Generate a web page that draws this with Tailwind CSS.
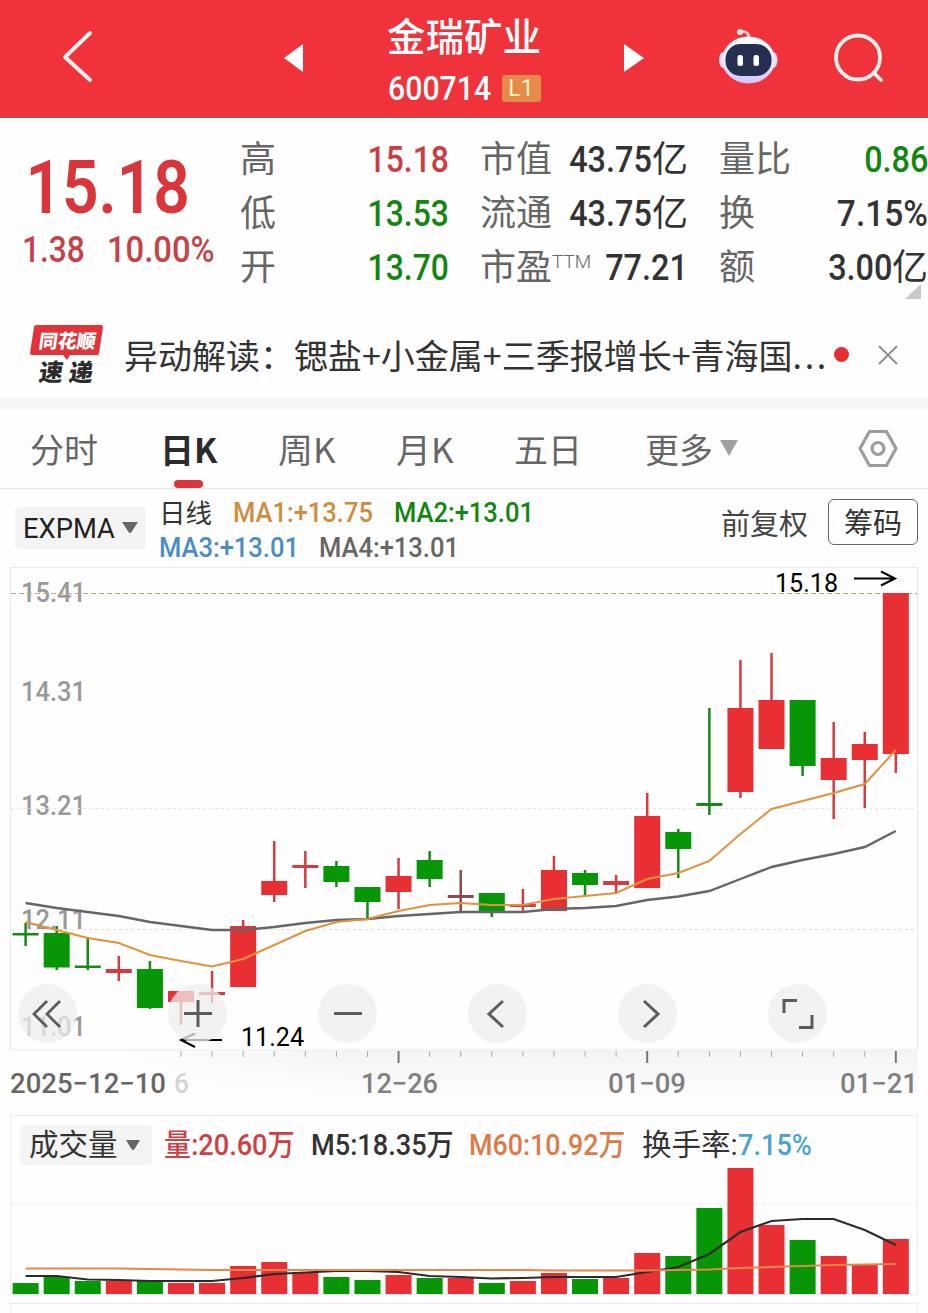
<!DOCTYPE html>
<html lang="zh-CN">

<head>
    <meta charset="UTF-8" />
    <meta
        name="viewport"
        content="width=device-width, initial-scale=1.0"
    />
    <script src="https://cdn.jsdelivr.net/npm/@tailwindcss/browser@4"></script>
    <title>金瑞矿业 600714</title>
</head>

<body class="w-[928px] h-[1313px] overflow-hidden bg-[#fefefe] font-[Roboto,'Noto_Sans_CJK_SC',sans-serif] text-[#333]">

    <!-- title bar -->
    <header class="h-[118px] bg-[#f0323a] border-b border-[#a8545c] flex items-start text-white">
        <svg class="w-[284px] h-[117px] shrink-0" viewBox="0 0 284 117" fill="none" stroke="#fff0ee" stroke-width="4">
            <path d="M90 33 65 57 90 80" stroke-linecap="round" stroke-linejoin="round" />
        </svg>
        <svg class="w-5 h-[117px] shrink-0" viewBox="0 0 20 117" fill="#fff">
            <path d="M0 58 19 44v28z" />
        </svg>
        <div class="w-[320px] pt-[18px] flex flex-col items-center">
            <h1 class="text-[38.5px] leading-[40px] font-medium whitespace-nowrap">金瑞矿业</h1>
            <div class="mt-[14px] w-[153px] h-8 flex items-center justify-between">
                <span class="w-[105px] text-[34px] leading-8 font-medium origin-left scale-x-[.89]">600714</span>
                <span class="w-[39px] h-[27px] rounded-[3px] bg-[#e58a48] text-[#fff3c8] text-[23px] leading-[27px] text-center">L1</span>
            </div>
        </div>
        <svg class="w-5 h-[117px] shrink-0" viewBox="0 0 20 117" fill="#fff">
            <path d="M0 44v28l20-14z" />
        </svg>
        <svg class="ml-[74px] w-[60px] h-[117px] shrink-0" viewBox="718 0 60 117">
            <defs>
                <linearGradient id="shell" x1="0" y1="0" x2="0" y2="1">
                    <stop offset="0" stop-color="#fff" />
                    <stop offset=".6" stop-color="#e9e4ff" />
                    <stop offset="1" stop-color="#d3c4fb" />
                </linearGradient>
            </defs>
            <path d="M739 32q10-2 10 6" fill="none" stroke="#fbd5e4" stroke-width="2.5" />
            <circle cx="740" cy="32" r="3" fill="#fde2ea" />
            <ellipse cx="723.5" cy="60" rx="4.5" ry="8" fill="#e8dafc" />
            <ellipse cx="773" cy="60" rx="4.5" ry="8" fill="#e8dafc" />
            <ellipse cx="748.5" cy="60" rx="26.5" ry="23.5" fill="url(#shell)" />
            <rect x="725.500" y="44" width="46" height="32" rx="15" fill="#253050" />
            <rect x="737.500" y="55" width="5.500" height="11" rx="2.500" fill="#fff" />
            <rect x="753.500" y="55" width="5.500" height="11" rx="2.500" fill="#fff" />
        </svg>
        <svg class="ml-[54px] w-[56px] h-[117px] shrink-0" viewBox="832 0 56 117" fill="none" stroke="#fff0ee" stroke-width="3.800" stroke-linecap="round">
            <circle cx="858" cy="57.500" r="22" />
            <path d="m874 73 7 7" />
        </svg>
    </header>

    <!-- quote -->
    <section class="h-[192px] flex relative">
        <div class="w-[240px] pl-[22px] pt-[35px] text-[#d9353b] whitespace-nowrap">
            <div class="pl-1 h-[70px] text-[74px] leading-[70px] font-semibold origin-left scale-x-[.865]">15.18</div>
            <div class="mt-2 flex h-9 text-[36px] leading-[38px] font-medium text-[#c64247]">
                <span class="w-[85px] origin-left scale-x-[.88]">1.38</span>
                <span class="origin-left scale-x-[.91]">10.00%</span>
            </div>
        </div>
        <dl class="w-[209px] pt-[15px] text-[36px] leading-[54px]">
            <div class="flex justify-between">
                <dt class="text-[#666]">高</dt>
                <dd class="origin-right scale-x-[.885] font-medium text-[#cb3d43]">15.18</dd>
            </div>
            <div class="flex justify-between">
                <dt class="text-[#666]">低</dt>
                <dd class="origin-right scale-x-[.885] font-medium text-[#128512]">13.53</dd>
            </div>
            <div class="flex justify-between">
                <dt class="text-[#666]">开</dt>
                <dd class="origin-right scale-x-[.885] font-medium text-[#128512]">13.70</dd>
            </div>
        </dl>
        <dl class="ml-[31px] w-[208px] pt-[15px] text-[36px] leading-[54px] whitespace-nowrap">
            <div class="flex justify-between">
                <dt class="text-[#666]">市值</dt>
                <dd><span class="inline-block origin-right scale-x-[.9] font-medium">43.75</span>亿</dd>
            </div>
            <div class="flex justify-between">
                <dt class="text-[#666]">流通</dt>
                <dd><span class="inline-block origin-right scale-x-[.9] font-medium">43.75</span>亿</dd>
            </div>
            <div class="flex justify-between">
                <dt class="flex text-[#666]">市盈<span class="h-9 text-[19px] leading-[42px] font-light">TTM</span></dt>
                <dd class="-ml-4 origin-right scale-x-[.9] font-medium">77.21</dd>
            </div>
        </dl>
        <dl class="ml-[31px] w-[209px] pt-[15px] text-[36px] leading-[54px] whitespace-nowrap">
            <div class="flex justify-between">
                <dt class="text-[#666]">量比</dt>
                <dd class="origin-right scale-x-[.9] font-medium text-[#128512]">0.86</dd>
            </div>
            <div class="flex justify-between">
                <dt class="text-[#666]">换</dt>
                <dd class="origin-right scale-x-[.93] font-medium">7.15%</dd>
            </div>
            <div class="flex justify-between">
                <dt class="text-[#666]">额</dt>
                <dd><span class="inline-block origin-right scale-x-[.9] font-medium">3.00</span>亿</dd>
            </div>
        </dl>
        <svg class="absolute right-[7px] top-[166px] size-4" viewBox="0 0 16 16" fill="#c8c8c8">
            <path d="M16 0v15H0z" />
        </svg>
    </section>

    <!-- news line -->
    <section class="h-[88px] pl-[29px] flex items-center">
        <svg class="w-[76px] h-[66px] shrink-0" viewBox="29 321 76 66" font-family="'Noto Sans CJK SC', sans-serif" font-weight="900">
            <path d="M37 325h64q2 0 2 2l-4 26q0 2-2 2H70l-3 5-4-5H32q-2 0-2-2l4-26q0-2 3-2z" fill="#e0343a" />
            <text transform="translate(38 348) skewX(-8)" font-size="19" fill="#fff" textLength="57">同花顺</text>
            <text transform="translate(38 381) skewX(-8)" font-size="24" fill="#2c2c2c" textLength="54">速递</text>
        </svg>
        <p class="ml-[19px] pt-0.5 w-[706px] text-[34px] leading-[50px] whitespace-nowrap font-['Noto_Sans_CJK_SC',sans-serif]">异动解读：锶盐+小金属+三季报增长+青海国<span class="tracking-[2.600px]">...</span></p>
        <span class="ml-1 size-[15px] rounded-full bg-[#e62e34]"></span>
        <svg class="mt-0.5 ml-[29px] size-5" viewBox="0 0 20 20" fill="none" stroke="#8f8f8f" stroke-width="2">
            <path d="m1 1 18 18M19 1 1 19" />
        </svg>
    </section>

    <!-- period tabs -->
    <nav class="h-[91px] border-t-[11px] border-t-[#f5f5f5] border-b border-b-[#e6e6e6] pl-[30px] flex text-[34px] leading-[79px] text-[#666] whitespace-nowrap font-['Noto_Sans_CJK_SC',sans-serif]">
        <span class="w-[130px]">分时</span>
        <span class="w-[118px] relative font-bold text-[#2b2b2b]">日K<i class="absolute left-[14px] top-[71px] w-[29px] h-2 rounded bg-[#d9353b]"></i></span>
        <span class="w-[118px] origin-left scale-x-[1.03]">周K</span>
        <span class="w-[118px] origin-left scale-x-[1.03]">月K</span>
        <span class="w-[131px]">五日</span>
        <span class="w-[75px]">更多</span>
        <svg class="mt-[31px] w-[18px] h-4" viewBox="0 0 20 16" preserveAspectRatio="none" fill="#a0a0a0">
            <path d="M0 0h20l-10 16z" />
        </svg>
        <svg class="ml-[120px] mt-5 size-10" viewBox="0 0 40 40" fill="none" stroke="#9c9c9c" stroke-width="3.200" stroke-linejoin="round">
            <path d="M11.500 2.500h17L38 19.500l-9.500 17h-17L2 19.500z" />
            <circle cx="20" cy="19.500" r="6" />
        </svg>
    </nav>

    <!-- indicator line -->
    <section class="h-[78px] pl-[15px] flex items-start">
        <div class="mt-[18px] w-[131px] h-[42px] rounded bg-[#f4f4f4] pl-2 flex items-center text-[#222]">
            <span class="w-[99px] pt-0.5 text-[28.5px] leading-10 origin-left scale-x-[.96]">EXPMA</span>
            <svg class="w-4 h-3" viewBox="0 0 16 12" fill="#666">
                <path d="M0 0h16l-6.500 10q-1.500 2-3 0z" />
            </svg>
        </div>
        <div class="ml-[13px] w-[562px] pt-[7px] text-[27px] leading-[35px] whitespace-nowrap">
            <div class="flex">
                <span class="w-[74px] text-[26.500px]">日线</span>
                <span class="w-[161px] origin-left scale-x-[.945] font-medium text-[#d08c3e]">MA1:+13.75</span>
                <span class="origin-left scale-x-[.945] font-medium text-[#128512]">MA2:+13.01</span>
            </div>
            <div class="flex leading-[34px]">
                <span class="w-[160px] origin-left scale-x-[.945] font-medium text-[#4a8dc4]">MA3:+13.01</span>
                <span class="origin-left scale-x-[.945] font-medium text-[#666]">MA4:+13.01</span>
            </div>
        </div>
        <span class="w-[107px] pt-[16px] text-[29px] leading-10 text-[#444] whitespace-nowrap">前复权</span>
        <span class="mt-[10px] w-[90px] h-[46px] rounded-md border border-[#666] text-center text-[29px] leading-[48px] whitespace-nowrap">筹码</span>
    </section>

    <!-- candles -->
    <main class="relative h-[548px]">
        <svg id="kline" class="block w-[928px] h-[548px]" viewBox="0 567 928 548"></svg>
        <div class="absolute left-[17.500px] top-[417px] flex gap-[91px]">
            <button class="size-[59px] rounded-full bg-[#ededed]/75">
                <svg viewBox="0 0 59 59" fill="none" stroke="#5c5c5c" stroke-width="2.800">
                    <path d="M29 17 16 30l13 13M42 17 29 30l13 13" />
                </svg>
            </button>
            <button class="size-[59px] rounded-full bg-[#ededed]/75">
                <svg viewBox="0 0 59 59" fill="none" stroke="#5c5c5c" stroke-width="3">
                    <path d="M16 29.500h28M30 16v27" />
                </svg>
            </button>
            <button class="size-[59px] rounded-full bg-[#ededed]/75">
                <svg viewBox="0 0 59 59" fill="none" stroke="#5c5c5c" stroke-width="3">
                    <path d="M16 29.500h28" />
                </svg>
            </button>
            <button class="size-[59px] rounded-full bg-[#ededed]/75">
                <svg viewBox="0 0 59 59" fill="none" stroke="#5c5c5c" stroke-width="3">
                    <path d="M35 17 21 30l14 13" />
                </svg>
            </button>
            <button class="size-[59px] rounded-full bg-[#ededed]/75">
                <svg viewBox="0 0 59 59" fill="none" stroke="#5c5c5c" stroke-width="3">
                    <path d="m26 17 14 13-14 13" />
                </svg>
            </button>
            <button class="size-[59px] rounded-full bg-[#ededed]/75">
                <svg viewBox="0 0 59 59" fill="none" stroke="#5c5c5c" stroke-width="3">
                    <path d="M16 29V16.500h13M44 31v12.500H31" />
                </svg>
            </button>
        </div>
    </main>

    <!-- volume -->
    <section class="relative ml-[10px] w-[908px] h-[180px] border border-[#ececec]">
        <svg id="volume" class="absolute left-[-11px] top-[-1px] w-[928px] h-[180px]" viewBox="0 1115 928 180"></svg>
        <div class="relative pl-[9px] pt-2 flex items-center text-[29.500px] leading-[42px] whitespace-nowrap">
            <div class="w-[132px] h-10 rounded bg-[#f4f4f4] pl-[9px] flex items-center">
                <span class="w-[96px]">成交量</span>
                <svg class="w-4 h-3" viewBox="0 0 16 12" fill="#666">
                    <path d="M1 1h14l-5.500 9q-1.500 2-3 0z" />
                </svg>
            </div>
            <span class="ml-3 w-[147px] text-[#cf3f43] font-medium origin-left scale-x-[.92]">量:20.60万</span>
            <span class="w-[158px] font-medium origin-left scale-x-[.92]">M5:18.35万</span>
            <span class="w-[173px] text-[#dc7b48] font-medium origin-left scale-x-[.91]">M60:10.92万</span>
            <span class="w-[96px]">换手率:</span>
            <span class="text-[#4aa3cc] font-medium origin-left scale-x-[.92]">7.15%</span>
        </div>
    </section>
    <div class="mt-2 ml-[10px] w-[908px] h-5 border border-[#ececec]"></div>

    <script>
        const RED = '#e83034'
        const GREEN = '#069606'

        // colour, high, low, body top, body bottom, volume top
        const days = [
            ['g', 923, 946, 933, 935.5, 1283],
            ['g', 926, 970, 933, 967.5, 1277],
            ['g', 937, 970, 965.5, 968, 1281],
            ['r', 956, 981, 969, 973, 1281],
            ['g', 961, 1009, 969, 1008, 1281],
            ['r', 991, 1025, 991, 1002, 1283],
            ['r', 971, 1003, 992, 995, 1283],
            ['r', 920, 987, 926, 987, 1266],
            ['r', 841, 902, 881, 895, 1262],
            ['r', 851, 888, 865, 868, 1272],
            ['g', 861, 887, 866, 882, 1277],
            ['g', 887, 918, 887, 902, 1280],
            ['r', 858, 909, 876, 892, 1275],
            ['g', 851, 887, 860, 879, 1278],
            ['r', 870, 912, 895, 898, 1278],
            ['g', 893, 917, 893, 912, 1283],
            ['r', 889, 911, 904, 907, 1281],
            ['r', 856, 911, 870, 911, 1273],
            ['g', 870, 895, 873, 885, 1279],
            ['r', 875, 894, 881, 885, 1278],
            ['r', 793, 888, 816, 888, 1253],
            ['g', 829, 878, 832, 849, 1256],
            ['g', 708, 815, 803, 806, 1208],
            ['r', 660, 798, 708, 792, 1168],
            ['r', 653, 749, 700, 749, 1225],
            ['g', 700, 776, 700, 766, 1240],
            ['r', 722, 819, 758, 780, 1256],
            ['r', 732, 808, 744, 760, 1265],
            ['r', 593, 773, 593, 754, 1239],
        ]
        const fast = [922, 930, 938, 943, 955, 961, 966.5, 959, 945, 931, 922, 919, 911, 905, 903, 905, 905, 899, 896, 893, 879, 873, 861, 834, 809, 801, 793, 784, 750]
        const slow = [903, 908, 912, 916, 922, 926, 930, 930, 927, 923, 920, 919, 916, 914, 912, 912, 912, 909, 908, 906, 900, 896.5, 891, 879, 867, 860, 854, 847, 831]
        const m5 = [1276, 1276, 1279.5, 1280, 1281, 1281, 1281, 1278, 1274, 1272.5, 1271, 1271, 1272, 1276, 1277, 1278.5, 1278, 1277, 1277, 1277, 1272, 1267, 1254, 1232, 1221, 1219, 1219, 1230, 1245]
        const m60 = [1268.5, 1268.5, 1268.5, 1268.5, 1269, 1269.5, 1270, 1270, 1270, 1270, 1270, 1270, 1270, 1270, 1270, 1270, 1270, 1270.5, 1270.5, 1270.5, 1270.5, 1270, 1269.5, 1268, 1267, 1266, 1265, 1264.5, 1264]

        const cx = i => 25.6 + i * 31.08
        const line = (ys, color, w) =>
            `<polyline points="${ys.map((y, i) => `${cx(i)},${y}`).join(' ')}" fill="none" stroke="${color}" stroke-width="${w}" />`
        const rect = (x, y, w, h, fill) => `<rect x="${x}" y="${y}" width="${w}" height="${h}" fill="${fill}" />`
        const dash = (y, color, pattern) => `<path d="M11 ${y}H917" stroke="${color}" stroke-dasharray="${pattern}" />`
        const label = (x, y, w, text, color, size = 28, weight = 500) =>
            `<text x="${x}" y="${y}" textLength="${w}" lengthAdjust="spacingAndGlyphs" font-size="${size}" font-weight="${weight}" fill="${color}">${text}</text>`

        let k = `<defs>
            <linearGradient id="band" x1="0" y1="0" x2="1" y2="0">
                <stop offset="0" stop-color="#f4f4f4" stop-opacity="0" /><stop offset=".3" stop-color="#f4f4f4" />
            </linearGradient>
            <linearGradient id="fade" x1="0" y1="0" x2="0" y2="1">
                <stop offset="0" stop-color="#fefefe" stop-opacity="0" /><stop offset="1" stop-color="#fefefe" />
            </linearGradient>
        </defs>`
        k += rect(100, 1051, 818, 50, 'url(#band)') + rect(100, 1051, 818, 51, 'url(#fade)')
        k += '<path d="M10.500 567.500H917.500V1050H10.500z" fill="#fefefe" stroke="#e8e8e8" />'
        k += label(21, 602, 65, '15.41', '#999') + label(21, 701, 65, '14.31', '#999')
        k += label(21, 815, 65, '13.21', '#999') + label(21, 929, 65, '12.11', '#999')
        k += label(21, 1036, 65, '11.01', '#999')
        k += dash(593.5, '#b5ac84', '5 3') + dash(808.5, '#e4e4e4', '3 3') + dash(929.5, '#e0e0e0', '3 3')
        days.forEach(([c, high, low, top, bottom], i) => {
            const fill = c === 'r' ? RED : GREEN
            const wick = c === 'r' ? '#d43c42' : '#158a1b'
            k += rect(cx(i) - 1.25, high, 2.5, low - high, i === 14 ? '#8c4a52' : wick)
            k += rect(cx(i) - 13, top, 26, bottom - top, bottom - top > 5 ? fill : i === 14 ? '#8c4a52' : wick)
        })
        k += line(slow, '#666', 2.4) + line(fast, '#df933f', 2)
        k += label(775, 592, 63, '15.18', '#000', 26, 400) + label(241, 1046, 63, '11.24', '#000', 26, 400)
        k += '<path d="M854 578.500h40M881 571.500l14 7-14 7M222 1040h-40M195 1033.500l-14 6.500 14 7" fill="none" stroke="#000" stroke-width="2" />'
        for (let i = 5; i < 29; i++) {
            const major = i % 8 === 4
            k += rect(cx(i) - (major ? 1 : .5), 1051, major ? 2 : 1, major ? 12 : 6, major ? '#777' : '#aaa')
        }
        k += label(10, 1093, 156, '2025−12−10', '#666') + label(174, 1093, 15, '6', '#d4d4d4')
        k += label(361, 1093, 77, '12−26', '#808080') + label(608, 1093, 78, '01−09', '#808080') + label(840, 1093, 78, '01−21', '#808080')
        document.getElementById('kline').innerHTML = k

        let v = dash(1204, '#e6e6e6', '4 4')
        days.forEach(([c, , , , , top], i) => {
            v += rect(cx(i) - 13, top, 26, 1294 - top, c === 'r' ? RED : GREEN)
        })
        v += line(m5, '#2b2b2b', 2.2) + line(m60, '#e8854a', 2.2)
        document.getElementById('volume').innerHTML = v
    </script>

</body>

</html>
